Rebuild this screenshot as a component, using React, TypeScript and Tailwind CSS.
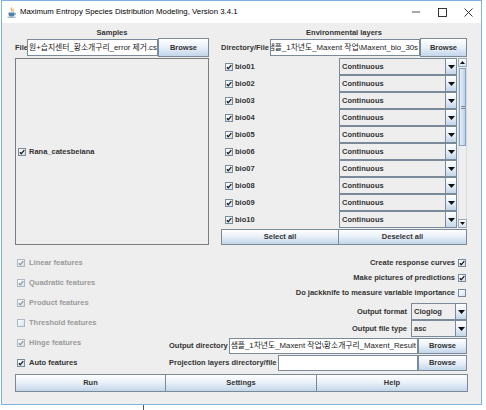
import React from "react";

function Check({ checked = true, disabled = false }: { checked?: boolean; disabled?: boolean }) {
  return (
    <span
      className={`inline-flex w-[8px] h-[8px] shrink-0 items-center justify-center border ${
        disabled ? "border-[#aeb8c2]" : "border-[#7a8a99]"
      } bg-gradient-to-br from-[#ffffff] to-[#d3e1ee]`}
    >
      {checked && (
        <svg width="6" height="6" viewBox="0 0 6 6">
          <path
            d="M0.9 3.3 L2.2 4.8 L5.3 1.2"
            stroke={disabled ? "#8f959b" : "#1a1a1a"}
            strokeWidth="1.3"
            fill="none"
          />
        </svg>
      )}
    </span>
  );
}

function Btn({ children, className = "" }: { children: React.ReactNode; className?: string }) {
  return (
    <div
      className={`flex items-center justify-center border border-[#7a8a99] bg-gradient-to-b from-[#ffffff] via-[#e7eff8] to-[#c3d6ea] font-bold text-[7.5px] text-[#333333] ${className}`}
    >
      {children}
    </div>
  );
}

function Arrow() {
  return (
    <svg width="7" height="4" viewBox="0 0 7 4">
      <path d="M0 0H7L3.5 4Z" fill="#111" />
    </svg>
  );
}

function Combo({ value, className = "" }: { value: string; className?: string }) {
  return (
    <div className={`flex border border-[#7a8a99] bg-[#eeeeee] ${className}`}>
      <div className="flex-1 flex items-center pl-[2px] font-bold text-[7.5px] text-[#333333] overflow-hidden whitespace-nowrap">
        {value}
      </div>
      <div className="w-[11px] shrink-0 border-l border-[#7a8a99] bg-gradient-to-b from-[#ffffff] via-[#e7eff8] to-[#c3d6ea] flex items-center justify-center">
        <Arrow />
      </div>
    </div>
  );
}

function Field({ text, right = false, className = "" }: { text: string; right?: boolean; className?: string }) {
  return (
    <div
      className={`flex items-center overflow-hidden whitespace-nowrap border border-[#7a8a99] bg-white font-normal text-[7.8px] text-[#222] ${
        right ? "justify-end pr-[1px]" : "justify-start pl-[1px]"
      } ${className}`}
    >
      <span className="shrink-0">{text}</span>
    </div>
  );
}

function JavaIcon() {
  return (
    <svg width="10" height="11" viewBox="0 0 10 11">
      <path d="M4.5 0.5 C3 2 6 3 4.5 4.5" stroke="#e07b20" strokeWidth="0.9" fill="none" />
      <path d="M6 1.5 C5 2.5 7 3 6 4.5" stroke="#e07b20" strokeWidth="0.8" fill="none" />
      <path d="M1.5 5.5 H7.5 V7.5 C7.5 9 6 9.5 4.5 9.5 C3 9.5 1.5 9 1.5 7.5 Z" fill="#5382a1" />
      <path d="M7.5 6 C9 6 9 8 7.3 8" stroke="#5382a1" strokeWidth="0.8" fill="none" />
      <path d="M0.5 10.2 H8.5" stroke="#5382a1" strokeWidth="0.8" />
    </svg>
  );
}

const bios = ["bio01", "bio02", "bio03", "bio04", "bio05", "bio06", "bio07", "bio08", "bio09", "bio10"];

const features: { label: string; checked: boolean; disabled: boolean }[] = [
  { label: "Linear features", checked: true, disabled: true },
  { label: "Quadratic features", checked: true, disabled: true },
  { label: "Product features", checked: true, disabled: true },
  { label: "Threshold features", checked: false, disabled: true },
  { label: "Hinge features", checked: true, disabled: true },
  { label: "Auto features", checked: true, disabled: false },
];

export default function App() {
  return (
    <div className="w-[486px] h-[410px] bg-white overflow-hidden font-['Liberation_Sans','Noto_Sans_CJK_KR',sans-serif]">
      <div className="ml-[1px] w-[481px] h-[405px] border border-[#7fb0e0] flex flex-col">
        {/* Title bar */}
        <div className="h-[22px] shrink-0 bg-white flex items-center">
          <div className="ml-[5px] w-[10px] h-[11px] flex items-center">
            <JavaIcon />
          </div>
          <span className="ml-[3px] text-[7.8px] text-black whitespace-nowrap">
            Maximum Entropy Species Distribution Modeling, Version 3.4.1
          </span>
          <div className="ml-auto flex items-center h-full">
            <div className="w-[26px] h-full flex items-center justify-center">
              <svg width="8" height="2" viewBox="0 0 8 2">
                <path d="M0 1H8" stroke="#222" strokeWidth="0.8" />
              </svg>
            </div>
            <div className="w-[26px] h-full flex items-center justify-center">
              <svg width="9" height="9" viewBox="0 0 9 9">
                <rect x="0.5" y="0.5" width="8" height="8" stroke="#222" strokeWidth="0.9" fill="none" />
              </svg>
            </div>
            <div className="w-[26px] h-full flex items-center justify-center">
              <svg width="9" height="9" viewBox="0 0 9 9">
                <path d="M0.5 0.5L8.5 8.5M8.5 0.5L0.5 8.5" stroke="#222" strokeWidth="0.9" />
              </svg>
            </div>
          </div>
        </div>

        {/* Content */}
        <div className="flex-1 bg-[#eeeeee] px-[13px] pt-[4px] flex flex-col text-[#333333] text-[7.5px] font-bold">
          <div className="flex gap-[12px]">
            {/* Samples */}
            <div className="w-[194px] flex flex-col">
              <div className="h-[11px] flex items-center justify-center">Samples</div>
              <div className="h-[19px] flex items-stretch">
                <div className="w-[12px] flex items-center">File</div>
                <Field text="원+습지센터_황소개구리_error 제거.csv" className="w-[131px] my-[1px]" />
                <Btn className="flex-1">Browse</Btn>
              </div>
              <div className="mt-[1px] h-[187px] border border-[#7d7d7d] flex items-center pl-[2px] gap-[3px]">
                <Check />
                <span>Rana_catesbeiana</span>
              </div>
            </div>

            {/* Environmental layers */}
            <div className="w-[246px] flex flex-col">
              <div className="h-[11px] flex items-center justify-center">Environmental layers</div>
              <div className="h-[19px] flex items-stretch">
                <div className="w-[49px] flex items-center whitespace-nowrap">Directory/File</div>
                <Field text="샘플_1차년도_Maxent 작업\Maxent_bio_30s" right className="w-[150px] my-[1px]" />
                <Btn className="flex-1">Browse</Btn>
              </div>
              <div className="mt-[1px] h-[170px] flex">
                <div className="w-[236px] flex flex-col">
                  {bios.map((b) => (
                    <div key={b} className="h-[17px] flex">
                      <div className="w-[118px] flex items-center pl-[4px] gap-[2px]">
                        <Check />
                        <span>{b}</span>
                      </div>
                      <Combo value="Continuous" className="w-[118px]" />
                    </div>
                  ))}
                </div>
                {/* scrollbar */}
                <div className="w-[10px] flex flex-col pl-[1px]">
                  <div className="h-[9px] border border-[#9aaab8] bg-gradient-to-b from-[#ffffff] to-[#d6e3ef] flex items-center justify-center">
                    <svg width="5" height="3" viewBox="0 0 5 3">
                      <path d="M0 3H5L2.5 0Z" fill="#111" />
                    </svg>
                  </div>
                  <div className="flex-1 flex flex-col border-x border-[#d4dbe2]">
                    <div className="mt-[1px] h-[78px] border border-[#8ea4ba] bg-gradient-to-r from-[#e6eff8] to-[#bcd2e8] flex items-center justify-center">
                      <div className="w-[4px] flex flex-col gap-[1px]">
                        <div className="h-px bg-[#7a8a99]" />
                        <div className="h-px bg-[#7a8a99]" />
                      </div>
                    </div>
                  </div>
                  <div className="h-[9px] border border-[#9aaab8] bg-gradient-to-b from-[#ffffff] to-[#d6e3ef] flex items-center justify-center">
                    <svg width="5" height="3" viewBox="0 0 5 3">
                      <path d="M0 0H5L2.5 3Z" fill="#111" />
                    </svg>
                  </div>
                </div>
              </div>
              <div className="mt-[1px] h-[16px] flex">
                <Btn className="w-[118px]">Select all</Btn>
                <Btn className="flex-1 border-l-0">Deselect all</Btn>
              </div>
            </div>
          </div>

          {/* Bottom options */}
          <div className="mt-[8px] flex">
            <div className="w-[154px] flex flex-col">
              {features.map((f) => (
                <div key={f.label} className="h-[20px] flex items-center pl-[2px] gap-[4px]">
                  <Check checked={f.checked} disabled={f.disabled} />
                  <span className={f.disabled ? "text-[#9a9a9a]" : "text-[#333333]"}>{f.label}</span>
                </div>
              ))}
            </div>
            <div className="flex-1 flex flex-col pt-[2px]">
              <div className="h-[16px] flex items-center justify-end gap-[3px] pr-[2px]">
                <span>Create response curves</span>
                <Check />
              </div>
              <div className="h-[14px] flex items-center justify-end gap-[3px] pr-[2px]">
                <span>Make pictures of predictions</span>
                <Check />
              </div>
              <div className="h-[15px] flex items-center justify-end gap-[3px] pr-[2px]">
                <span>Do jackknife to measure variable importance</span>
                <Check checked={false} />
              </div>
              <div className="mt-[3px] h-[17px] flex items-stretch justify-end gap-[4px] pr-[1px]">
                <span className="flex items-center">Output format</span>
                <Combo value="Cloglog" className="w-[56px]" />
              </div>
              <div className="h-[17px] flex items-stretch justify-end gap-[4px] pr-[1px]">
                <span className="flex items-center">Output file type</span>
                <Combo value="asc" className="w-[56px]" />
              </div>
              <div className="mt-[1px] h-[16px] flex items-stretch pr-[1px]">
                <span className="flex items-center whitespace-nowrap">Output directory</span>
                <Field text="샘플_1차년도_Maxent 작업\황소개구리_Maxent_Result" right className="flex-1 ml-[1px]" />
                <Btn className="w-[49px]">Browse</Btn>
              </div>
              <div className="mt-[1px] h-[16px] flex items-stretch pr-[1px]">
                <span className="flex items-center whitespace-nowrap">Projection layers directory/file</span>
                <Field text="" className="flex-1 ml-[1px]" />
                <Btn className="w-[49px]">Browse</Btn>
              </div>
            </div>
          </div>

          {/* Bottom buttons */}
          <div className="mt-[1px] h-[18px] grid grid-cols-3">
            <Btn>Run</Btn>
            <Btn className="border-l-0">Settings</Btn>
            <Btn className="border-l-0">Help</Btn>
          </div>
        </div>
      </div>
      <div className="ml-[143px] w-px h-[5px] bg-[#555555]" />
    </div>
  );
}
